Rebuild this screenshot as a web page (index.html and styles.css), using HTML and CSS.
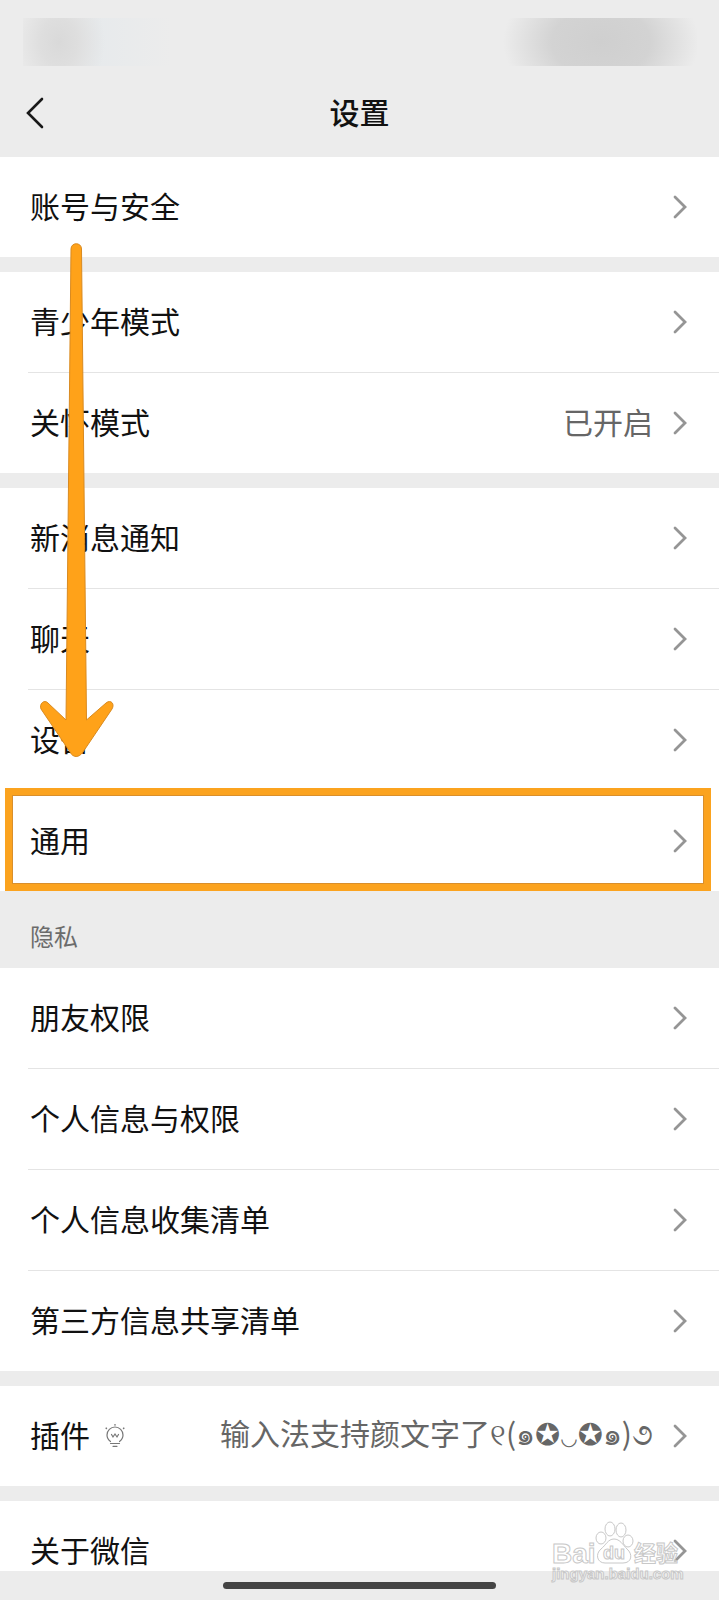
FILE: index.html
```html
<!DOCTYPE html>
<html lang="zh-CN">
<head>
<meta charset="utf-8">
<meta name="viewport" content="width=device-width, initial-scale=1">
<title>设置</title>
<link rel="stylesheet" href="styles.css">
</head>
<body>
<svg class="symbols" aria-hidden="true">
  <symbol id="chevron" viewBox="0 0 14 24"><path d="M2 2 L12 12 L2 22" fill="none" stroke="currentColor" stroke-width="2.8" stroke-linecap="round" stroke-linejoin="miter"/></symbol>
</svg>
<div class="screen">
  <header class="header">
    <div class="status">
      <span class="status-time"></span>
      <span class="status-icons"></span>
    </div>
    <div class="nav">
      <button class="back" type="button" aria-label="返回">
        <svg viewBox="0 0 18 32" width="18" height="32"><path d="M16 2 L2 16 L16 30" fill="none" stroke="currentColor" stroke-width="2.6" stroke-linecap="round"/></svg>
      </button>
      <h1 class="title">设置</h1>
    </div>
  </header>

  <main class="list">
    <section class="group">
      <a class="row" href="#"><span class="label">账号与安全</span><svg class="chevron"><use href="#chevron"/></svg></a>
    </section>
    <section class="group">
      <a class="row" href="#"><span class="label">青少年模式</span><svg class="chevron"><use href="#chevron"/></svg></a>
      <a class="row" href="#"><span class="label">关怀模式</span><span class="value">已开启</span><svg class="chevron"><use href="#chevron"/></svg></a>
    </section>
    <section class="group">
      <a class="row" href="#"><span class="label">新消息通知</span><svg class="chevron"><use href="#chevron"/></svg></a>
      <a class="row" href="#"><span class="label">聊天</span><svg class="chevron"><use href="#chevron"/></svg></a>
      <a class="row" href="#"><span class="label">设备</span><svg class="chevron"><use href="#chevron"/></svg></a>
      <a class="row row-marked" href="#"><span class="label">通用</span><svg class="chevron"><use href="#chevron"/></svg></a>
    </section>
    <h2 class="section-title">隐私</h2>
    <section class="group">
      <a class="row" href="#"><span class="label">朋友权限</span><svg class="chevron"><use href="#chevron"/></svg></a>
      <a class="row" href="#"><span class="label">个人信息与权限</span><svg class="chevron"><use href="#chevron"/></svg></a>
      <a class="row" href="#"><span class="label">个人信息收集清单</span><svg class="chevron"><use href="#chevron"/></svg></a>
      <a class="row" href="#"><span class="label">第三方信息共享清单</span><svg class="chevron"><use href="#chevron"/></svg></a>
    </section>
    <section class="group">
      <a class="row" href="#">
        <span class="label">插件</span>
        <svg class="bulb" viewBox="0 0 20 24" fill="none" stroke="currentColor" stroke-width="1.2" stroke-linecap="round">
          <path d="M5.500 17.500C3.500 16 2 14 2 11A8 8 0 0 1 18 11C18 14 16.500 16 14.500 17.500M5.500 19.500H14.500M8 22.300H12"/>
          <path d="M6.500 10.500L8 13L10 10L12 13L13.500 10.500"/>
          <path d="M10 .8V1M1.200 4.200L1.400 4.400M18.800 4.200L18.600 4.400" stroke-width="1.600"/>
        </svg>
        <span class="value">输入法支持颜文字了୧(๑✪<span class="smile">◡</span>✪๑)૭</span>
        <svg class="chevron"><use href="#chevron"/></svg>
      </a>
    </section>
    <section class="group">
      <a class="row" href="#"><span class="label">关于微信</span><svg class="chevron"><use href="#chevron"/></svg></a>
    </section>

    <svg class="arrow" viewBox="0 0 74 515" aria-hidden="true">
      <path d="M31 6C31 -1 41.500 -1 41.500 6L46.500 477L66 460C71 456 75 461 72 466L43 509C39 515 33 515 30 509L1 466C-1 461 4 456 8 460L26 477Z" fill="#ffa219" stroke="#d98a20" stroke-width="1"/>
    </svg>
  </main>

  <footer class="home"><span class="home-bar"></span></footer>

  <svg class="watermark" viewBox="0 0 136 64" aria-label="Baidu 经验">
    <g class="wm-shape">
      <ellipse cx="52" cy="16" rx="5" ry="6"/>
      <ellipse cx="61" cy="7" rx="5" ry="7"/>
      <ellipse cx="72" cy="8" rx="5" ry="7"/>
      <ellipse cx="79" cy="19" rx="5" ry="6"/>
      <path d="M65 17C71 17 74 23 78 27C84 32 83 41 74 41H56C48 41 46 32 52 27C57 23 59 17 65 17Z"/>
    </g>
    <text class="wm-text wm-big" x="3" y="41">Bai</text>
    <text class="wm-text wm-du" x="54" y="37">du</text>
    <text class="wm-text wm-cn" x="85" y="39">经验</text>
    <text class="wm-text wm-url" x="3" y="57">jingyan.baidu.com</text>
  </svg>
</div>
</body>
</html>
```
FILE: styles.css
```css
* {
  box-sizing: border-box;
}

body {
  margin: 0;
  background: #ececec;
  color: #111;
  font-family: "Noto Sans CJK SC", "Noto Sans", "DejaVu Sans", sans-serif;
}

.symbols {
  display: none;
}

.screen {
  position: relative;
  display: flex;
  flex-direction: column;
  height: 100vh;
  overflow: hidden;
}

.header {
  flex: none;
}

.status {
  display: flex;
  justify-content: space-between;
  height: 69px;
  padding: 18px 22px 3px 23px;
}

.status-time {
  width: 148px;
  background: radial-gradient(ellipse 46px 60px at 36px 50%, #d9d9d9, #dedede 40%, transparent), linear-gradient(90deg, transparent 20%, #e7eaec 50%, transparent);
}

.status-icons {
  width: 218px;
  background: radial-gradient(ellipse 50% 160% at 56% 50%, #cfcfcf, #d3d3d3 45%, transparent 90%);
}

.nav {
  display: grid;
  grid-template-columns: 1fr auto 1fr;
  align-items: center;
  height: 88px;
  padding: 0 26px;
}

.back {
  justify-self: start;
  display: flex;
  padding: 0;
  border: 0;
  background: none;
  color: #181818;
}

.title {
  margin: 0;
  padding-bottom: 4px;
  font-size: 30px;
  font-weight: 500;
  line-height: 40px;
}

.list {
  position: relative;
  flex: 1;
  min-height: 0;
  overflow: hidden;
}

.group {
  background: #fff;
}

.group + .group {
  margin-top: 15px;
}

.row {
  position: relative;
  display: flex;
  align-items: center;
  height: 100px;
  padding: 0 32px 0 30px;
  color: inherit;
  font-size: 30px;
  line-height: 44px;
  text-decoration: none;
  white-space: nowrap;
}

.row + .row {
  height: 101px;
  padding-top: 1px;
}

.row + .row::before {
  content: "";
  position: absolute;
  top: 0;
  left: 28px;
  right: 0;
  height: 1px;
  background: #e4e4e4;
}

.row + .row-marked::before {
  background: none;
}

.row-marked::after {
  content: "";
  position: absolute;
  inset: -2px 8px 0 5px;
  border: 8px solid #fba31f;
  outline: 1px solid #d98f2c;
  outline-offset: -8px;
}

.label,
.value {
  padding-bottom: 4px;
}

.value {
  margin-left: auto;
  color: #666;
}

.smile {
  font-size: 20px;
}

.chevron {
  flex: none;
  width: 14px;
  height: 24px;
  margin-left: auto;
  color: #959595;
}

.value + .chevron {
  margin-left: 20px;
}

.bulb {
  flex: none;
  width: 20px;
  height: 24px;
  margin-left: 15px;
  color: #777;
}

.section-title {
  display: flex;
  align-items: center;
  height: 77px;
  margin: 0;
  padding: 12px 30px 0;
  color: #6b6b6b;
  font-size: 24px;
  font-weight: 400;
  line-height: 34px;
}

.arrow {
  position: absolute;
  top: 86px;
  left: 40px;
  width: 74px;
  height: 515px;
}

.home {
  flex: none;
  display: flex;
  justify-content: center;
  height: 29px;
  padding-top: 11px;
}

.home-bar {
  width: 38%;
  height: 7px;
  border-radius: 4px;
  background: #444;
}

.watermark {
  position: absolute;
  right: 34px;
  bottom: 14px;
  width: 136px;
  height: 64px;
  overflow: visible;
  pointer-events: none;
}

.wm-shape,
.wm-text {
  fill: #fff;
  fill-opacity: 0.5;
  stroke: #c8c8c8;
  stroke-width: 1px;
}

.wm-text {
  font-family: "Liberation Sans", "Noto Sans CJK SC", sans-serif;
  font-weight: 700;
}

.wm-big {
  font-size: 28px;
}

.wm-du {
  font-size: 18px;
}

.wm-cn {
  font-size: 22px;
}

.wm-url {
  font-size: 15px;
}
```
